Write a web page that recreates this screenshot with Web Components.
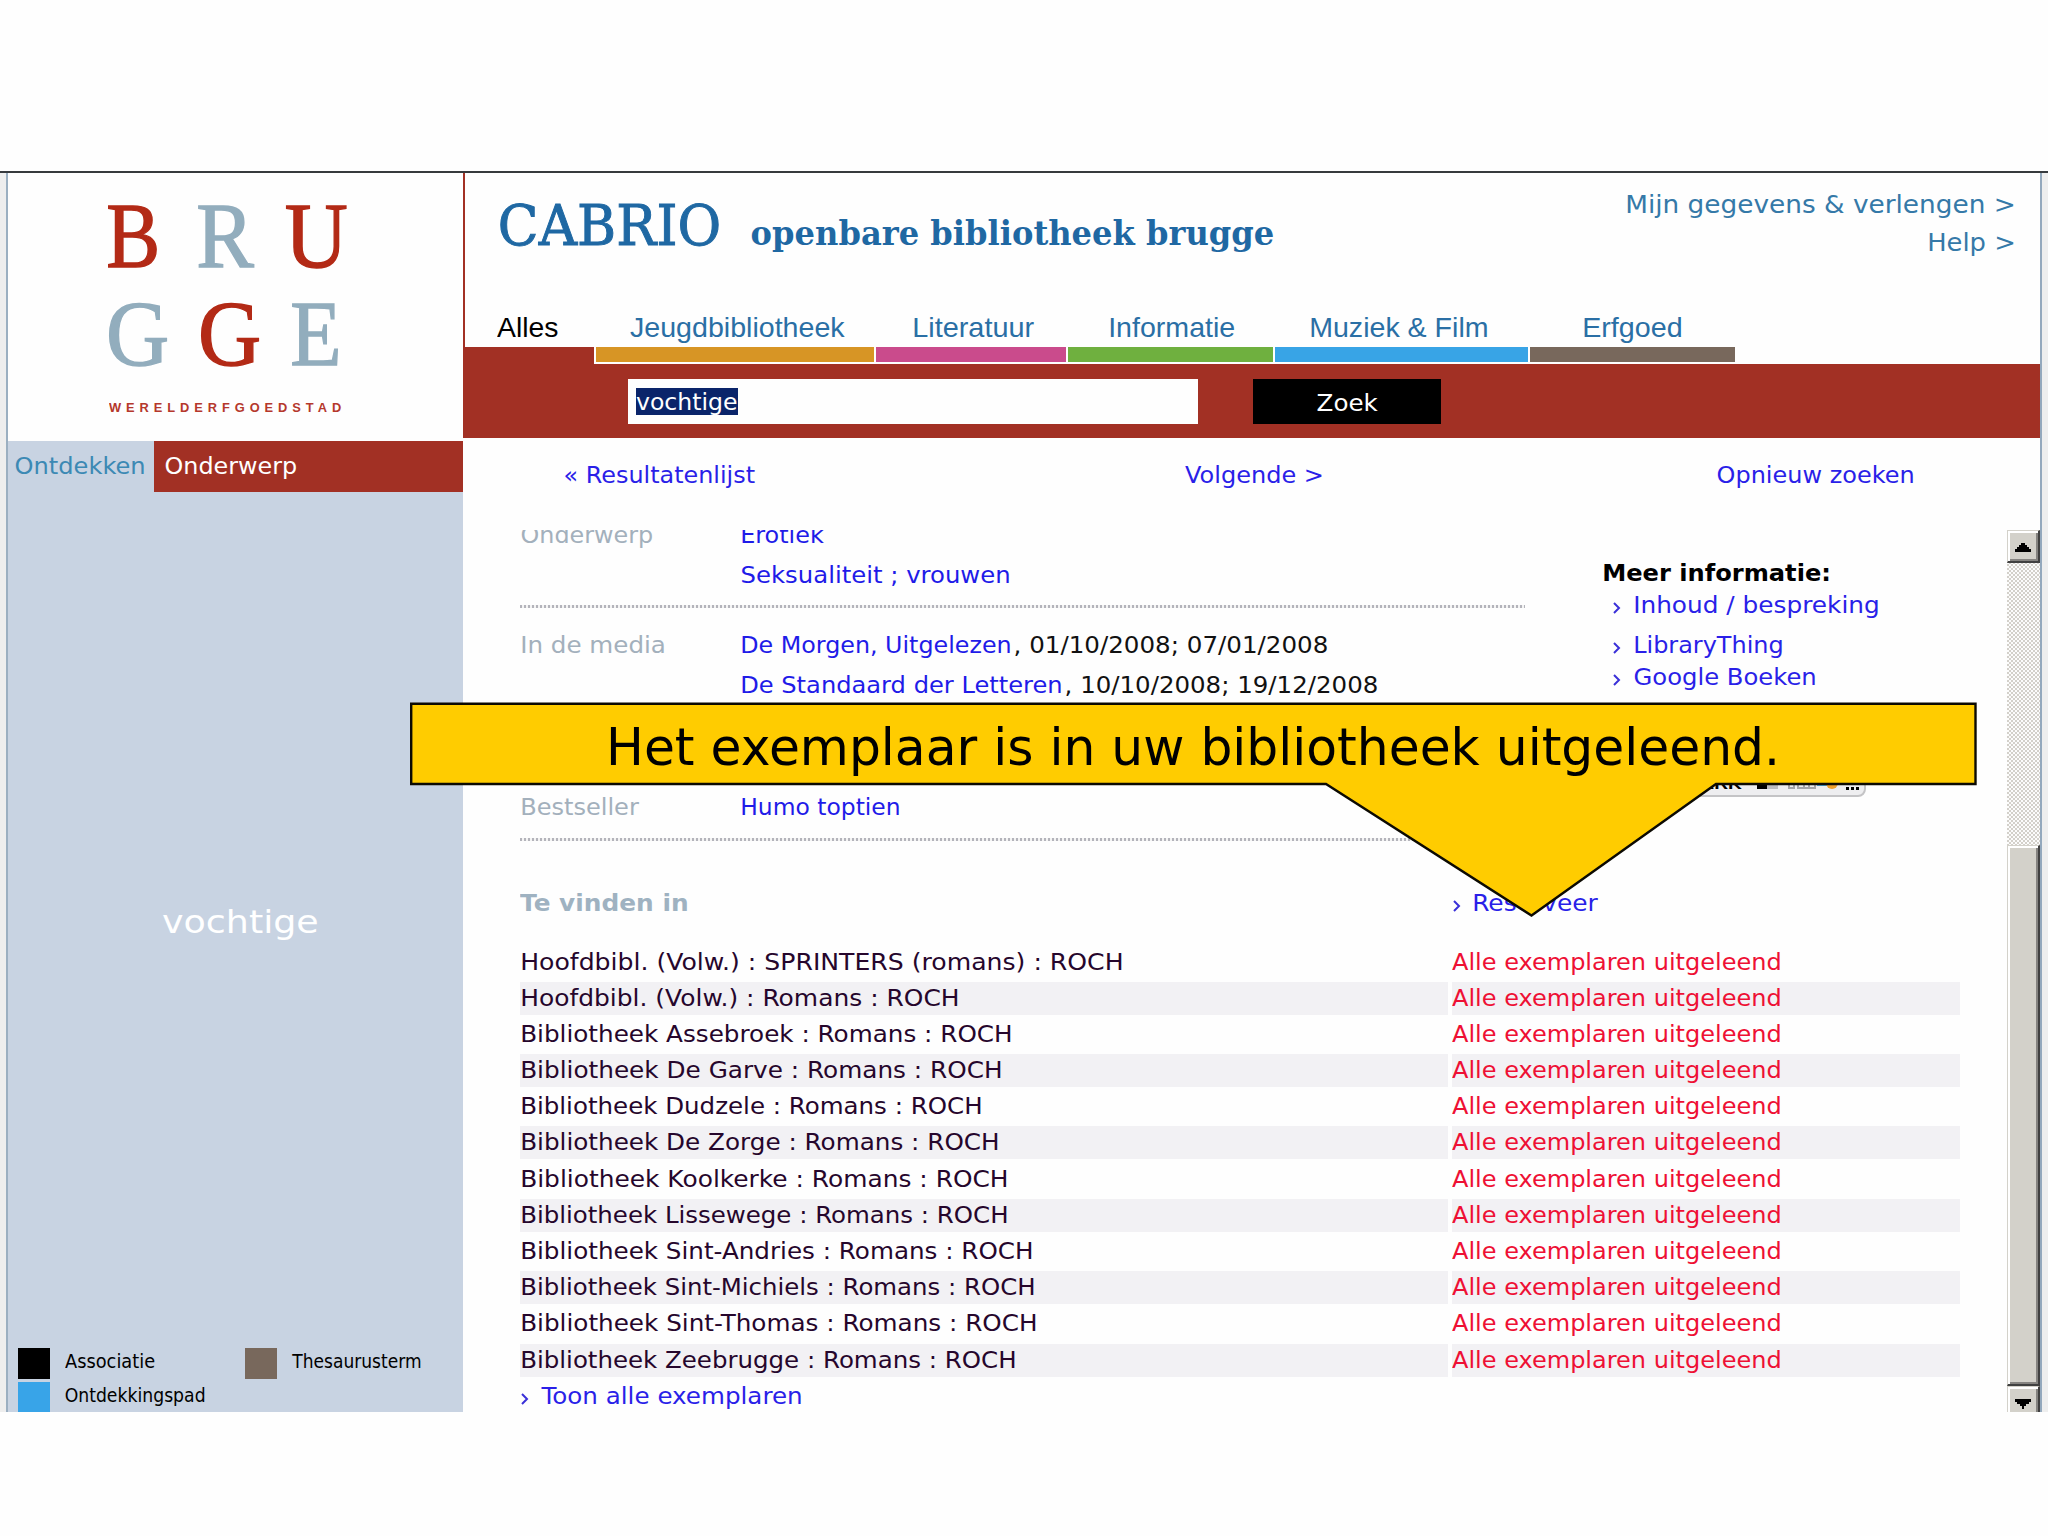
<!DOCTYPE html>
<html lang="nl">
<head>
<meta charset="utf-8">
<title>Cabrio - openbare bibliotheek Brugge</title>
<style>
  body {
    margin: 0;
    background: #fefefe;
    font-family: "DejaVu Sans", Verdana, sans-serif;
    font-size: 23px;
    color: #000;
  }
</style>
</head>
<body>
<cabrio-page>
  <discover-sidebar slot="sidebar"></discover-sidebar>
  <cabrio-header slot="main"></cabrio-header>
  <search-bar slot="main" value="vochtige"></search-bar>
  <result-nav slot="main"></result-nav>
  <record-view slot="main"></record-view>
  <call-out slot="overlay">Het exemplaar is in uw bibliotheek uitgeleend.</call-out>
</cabrio-page>

<script>
  // share of the side bearings that is trimmed off a line
  const TRIM = 0.4;

  // One line of text, stretched to `w` pixels wide
  class FitText extends HTMLElement {
    constructor() {
      super();
      this.attachShadow({ mode: 'open' });
      this.shadowRoot.innerHTML = `
        <style>
          :host { display: block; flex: none; white-space: nowrap; }
          span { display: block; width: max-content; transform-origin: 0 0; }
        </style>
        <span><slot></slot></span>
      `;
    }

    connectedCallback() {
      const width = parseFloat(this.getAttribute('w'));
      const style = getComputedStyle(this);
      const ctx = document.createElement('canvas').getContext('2d');
      ctx.font = `${style.fontWeight} ${style.fontSize} ${style.fontFamily}`;
      const spacing = parseFloat(style.letterSpacing) || 0;
      const text = this.textContent;
      const m = ctx.measureText(text);
      const left = m.actualBoundingBoxLeft * TRIM;
      const right = m.width - (m.width - m.actualBoundingBoxRight) * TRIM;
      const scale = width / (left + right + spacing * (text.length - 1));
      this.style.width = width + 'px';
      this.shadowRoot.querySelector('span').style.transform =
        `translateX(${left * scale}px) scaleX(${scale})`;
    }
  }

  class CabrioPage extends HTMLElement {
    constructor() {
      super();
      this.attachShadow({ mode: 'open' });
      this.shadowRoot.innerHTML = `
        <style>
          :host { display: block; padding-top: 171px; position: relative; height: 1365px; overflow: hidden; }
          .window {
            box-sizing: border-box;
            height: 1241px;
            border-top: 2px solid #363a3d;
            background: #fefefe;
            display: flex;
            overflow: hidden;
          }
          .edge { flex: none; box-sizing: border-box; width: 8px; background: #eeeeee; }
          .left { border-right: 2px solid #9bafc1; }
          .right { border-left: 2px solid #94a9bd; }
          .sidebar { flex: none; width: 455px; display: flex; }
          .main { flex: 1; min-width: 0; display: flex; flex-direction: column; }
        </style>
        <div class="window">
          <div class="edge left"></div>
          <div class="sidebar"><slot name="sidebar"></slot></div>
          <div class="main"><slot name="main"></slot></div>
          <div class="edge right"></div>
        </div>
        <slot name="overlay"></slot>
      `;
    }
  }

  class BruggeLogo extends HTMLElement {
    constructor() {
      super();
      this.attachShadow({ mode: 'open' });
      this.shadowRoot.innerHTML = `
        <style>
          :host { display: block; box-sizing: border-box; height: 268px; padding: 13px 0 0 99px; }
          .row { display: flex; font: 94px/98px "Liberation Serif", serif; height: 98px; -webkit-text-stroke: 1.4px; }
          .red { color: #b32a16; }
          .blue { color: #92adbd; }
          .sub {
            margin: 16px 0 0 2px;
            font: bold 13px/20px "Liberation Sans", sans-serif;
            letter-spacing: 5px;
            color: #b5382c;
          }
        </style>
        <div class="row">
          <fit-text class="red" w="52">B</fit-text>
          <fit-text class="blue" w="57" style="margin-left:38px">R</fit-text>
          <fit-text class="red" w="62" style="margin-left:31px">U</fit-text>
        </div>
        <div class="row">
          <fit-text class="blue" w="61">G</fit-text>
          <fit-text class="red" w="61" style="margin-left:31px">G</fit-text>
          <fit-text class="blue" w="49" style="margin-left:31px">E</fit-text>
        </div>
        <fit-text class="sub" w="232">WERELDERFGOEDSTAD</fit-text>
      `;
    }
  }

  class LegendItem extends HTMLElement {
    constructor() {
      super();
      this.attachShadow({ mode: 'open' });
      this.shadowRoot.innerHTML = `
        <style>
          :host { display: flex; font: 20px/26px "DejaVu Sans", sans-serif; color: #000; }
          i { flex: none; width: 32px; height: 31px; margin-right: 15px; background: ${this.getAttribute('color')}; }
        </style>
        <i></i><fit-text w="${this.getAttribute('w')}">${this.getAttribute('label')}</fit-text>
      `;
    }
  }

  class DiscoverSidebar extends HTMLElement {
    constructor() {
      super();
      this.attachShadow({ mode: 'open' });
      this.shadowRoot.innerHTML = `
        <style>
          :host { flex: 1; display: flex; flex-direction: column; background: #c8d3e2; }
          brugge-logo { background: #fefefe; }
          .tabs { display: flex; height: 51px; line-height: 51px; }
          .tab { box-sizing: border-box; width: 146px; padding-left: 7px; color: #3c89b4; }
          .active { flex: 1; padding-left: 11px; background: #a23024; color: #fff; }
          .cloud { flex: 1; display: flex; flex-direction: column; padding: 410px 0 0 154px; font-size: 32px; line-height: 40px; color: #fff; }
          .legend {
            display: grid;
            grid-template-columns: 227px 1fr;
            grid-auto-rows: 34px;
            height: 64px;
            padding-left: 10px;
            overflow: hidden;
          }
        </style>
        <brugge-logo></brugge-logo>
        <div class="tabs">
          <div class="tab"><fit-text w="130">Ontdekken</fit-text></div>
          <div class="tab active"><fit-text w="132">Onderwerp</fit-text></div>
        </div>
        <div class="cloud"><fit-text w="156">vochtige</fit-text></div>
        <div class="legend">
          <legend-item color="#000" label="Associatie" w="90"></legend-item>
          <legend-item color="#78685c" label="Thesaurusterm" w="129"></legend-item>
          <legend-item color="#38a4e8" label="Ontdekkingspad" w="140"></legend-item>
        </div>
      `;
    }
  }

  const TABS = [
    { label: 'Alles', w: 61, width: 129, indent: 32, color: '#a23024', active: true },
    { label: 'Jeugdbibliotheek', w: 215, width: 278, indent: 34, color: '#d79525' },
    { label: 'Literatuur', w: 121, width: 190, indent: 37, color: '#ca4b8c' },
    { label: 'Informatie', w: 126, width: 205, indent: 41, color: '#6fb03f' },
    { label: 'Muziek & Film', w: 178, width: 253, indent: 35, color: '#38a4e6' },
    { label: 'Erfgoed', w: 99, width: 205, indent: 53, color: '#78685c' },
  ];

  class CabrioHeader extends HTMLElement {
    constructor() {
      super();
      this.attachShadow({ mode: 'open' });
      this.shadowRoot.innerHTML = `
        <style>
          :host { display: block; height: 191px; border-left: 2px solid #a23024; }
          .top { display: flex; justify-content: space-between; height: 137px; }
          .brand { display: flex; padding-left: 34px; font-family: "DejaVu Serif", serif; color: #1f68a3; }
          .name { font-size: 56px; line-height: 64px; padding-top: 21px; -webkit-text-stroke: 1px; }
          .sub { font-size: 34px; font-weight: bold; line-height: 40px; margin-left: 31px; padding-top: 40px; }
          .links {
            display: flex;
            flex-direction: column;
            align-items: flex-end;
            padding: 13px 25px 0 0;
            font-size: 25px;
            line-height: 38px;
            color: #3579a8;
          }
          nav { display: flex; gap: 2px; }
          .tab { font: 28px/36px "Liberation Sans", Arial, sans-serif; color: #2a6fa5; height: 54px; }
          .tab fit-text { height: 37px; }
          .tab i { display: block; height: 15px; }
          .active { color: #000; }
          .active i { height: 17px; }
        </style>
        <div class="top">
          <div class="brand">
            <fit-text class="name" w="221">CABRIO</fit-text>
            <fit-text class="sub" w="523">openbare bibliotheek brugge</fit-text>
          </div>
          <div class="links">
            <fit-text w="389">Mijn gegevens &amp; verlengen &gt;</fit-text>
            <fit-text w="87">Help &gt;</fit-text>
          </div>
        </div>
        <nav>
          ${TABS.map(t => `
            <div class="tab ${t.active ? 'active' : ''}" style="width:${t.width}px">
              <fit-text w="${t.w}" style="margin-left:${t.indent}px">${t.label.replace('&', '&amp;')}</fit-text>
              <i style="background:${t.color}"></i>
            </div>`).join('')}
        </nav>
      `;
    }
  }

  class SearchBar extends HTMLElement {
    constructor() {
      super();
      this.attachShadow({ mode: 'open' });
      this.shadowRoot.innerHTML = `
        <style>
          :host { display: flex; box-sizing: border-box; height: 74px; padding: 15px 0 0 165px; background: #a23024; }
          .field { box-sizing: border-box; width: 570px; height: 45px; padding: 9px 8px; background: #fefefe; }
          .selection { display: flex; width: 102px; height: 27px; line-height: 29px; background: #0a246a; color: #fff; }
          .button {
            display: flex;
            justify-content: center;
            width: 188px;
            height: 45px;
            margin-left: 55px;
            line-height: 48px;
            background: #000;
            color: #fff;
          }
        </style>
        <div class="field"><div class="selection"><fit-text w="101">${this.getAttribute('value')}</fit-text></div></div>
        <div class="button"><fit-text w="61">Zoek</fit-text></div>
      `;
    }
  }

  class ResultNav extends HTMLElement {
    constructor() {
      super();
      this.attachShadow({ mode: 'open' });
      this.shadowRoot.innerHTML = `
        <style>
          :host {
            display: flex;
            box-sizing: border-box;
            height: 92px;
            padding: 23px 0 0 101px;
            line-height: 28px;
            color: #2a1fe8;
          }
        </style>
        <fit-text w="191">« Resultatenlijst</fit-text>
        <fit-text w="138" style="margin-left:430px">Volgende &gt;</fit-text>
        <fit-text w="197" style="margin-left:394px">Opnieuw zoeken</fit-text>
      `;
    }
  }

  class ArrowLink extends HTMLElement {
    constructor() {
      super();
      this.attachShadow({ mode: 'open' });
      this.shadowRoot.innerHTML = `
        <style>
          :host { display: flex; align-items: center; color: #2a1fe8; }
          svg { flex: none; margin: 5px ${this.getAttribute('gap') || 13}px 0 0; }
        </style>
        <svg width="8" height="12" viewBox="0 0 8 12" fill="none" stroke="#3a30d8" stroke-width="2"><path d="M1 1l5 5-5 5"/></svg>
        <fit-text w="${this.getAttribute('w')}">${this.textContent}</fit-text>
      `;
    }
  }

  class RecordDetails extends HTMLElement {
    constructor() {
      super();
      this.attachShadow({ mode: 'open' });
      this.shadowRoot.innerHTML = `
        <style>
          :host { display: block; width: 1005px; margin: -15px 0 0 57px; line-height: 40px; }
          .row { display: grid; grid-template-columns: 220px 1fr; padding-left: 1px; box-sizing: border-box; }
          .label { color: #a3b0bc; }
          .value { color: #1f1be8; }
          .line { display: flex; }
          .line .plain { color: #111; margin-left: 3px; }
          .rule {
            height: 3px;
            background: repeating-linear-gradient(90deg, #b4b4bb 0 2px, #f4f4f4 2px 4px);
          }
        </style>
        <div class="row">
          <div class="label"><fit-text w="132">Onderwerp</fit-text></div>
          <div class="value">
            <fit-text w="83">Erotiek</fit-text>
            <fit-text w="269">Seksualiteit ; vrouwen</fit-text>
          </div>
        </div>
        <div class="rule" style="margin:10px 0 17px"></div>
        <div class="row" style="height:162px">
          <div class="label"><fit-text w="144">In de media</fit-text></div>
          <div class="value">
            <div class="line"><fit-text w="270">De Morgen, Uitgelezen</fit-text><fit-text class="plain" w="314">, 01/10/2008; 07/01/2008</fit-text></div>
            <div class="line"><fit-text w="321">De Standaard der Letteren</fit-text><fit-text class="plain" w="313">, 10/10/2008; 19/12/2008</fit-text></div>
          </div>
        </div>
        <div class="row">
          <div class="label"><fit-text w="118">Bestseller</fit-text></div>
          <div class="value"><fit-text w="159">Humo toptien</fit-text></div>
        </div>
        <div class="rule" style="margin-top:11px"></div>
      `;
    }
  }

  class MoreInfo extends HTMLElement {
    constructor() {
      super();
      this.attachShadow({ mode: 'open' });
      this.shadowRoot.innerHTML = `
        <style>
          :host { display: block; margin: 27px 0 0 78px; line-height: 32px; }
          .title { font-weight: bold; }
          arrow-link { margin-left: 10px; }
          .bookmark {
            display: flex;
            align-items: flex-end;
            box-sizing: border-box;
            width: 263px;
            height: 36px;
            margin-top: 68px;
            padding: 0 0 2px 22px;
            border: 2px solid #c4c4c6;
            border-radius: 8px;
            background: #eeeef0;
            font: bold 15px/18px "Liberation Sans", sans-serif;
          }
          .bookmark svg { margin-left: 15px; }
        </style>
        <fit-text class="title" w="227">Meer informatie:</fit-text>
        <arrow-link w="245">Inhoud / bespreking</arrow-link>
        <arrow-link w="149" style="margin-top:8px">LibraryThing</arrow-link>
        <arrow-link w="182">Google Boeken</arrow-link>
        <div class="bookmark">
          <fit-text w="115">BOOKMARK</fit-text>
          <svg width="104" height="18" viewBox="0 0 104 18">
            <path d="M0 0h10v14H0z"/>
            <path d="M10 0h11v14H10z" fill="#bcbcc0"/>
            <path d="M32 3h5v10h-5zM41 3h17v10H41zM47 3v10M52 3v10M41 9h17" fill="none" stroke="#a4a4a8" stroke-width="2"/>
            <path d="M60 3h12v8H60z" fill="#4aa9dc"/>
            <circle cx="75" cy="8" r="6" fill="#f0a02c"/>
            <path d="M89 12h3v3h-3zM94 12h3v3h-3zM99 12h3v3h-3z"/>
          </svg>
        </div>
      `;
    }
  }

  const HOLDINGS = [
    ['Hoofdbibl. (Volw.) : SPRINTERS (romans) : ROCH', 602],
    ['Hoofdbibl. (Volw.) : Romans : ROCH', 438],
    ['Bibliotheek Assebroek : Romans : ROCH', 491],
    ['Bibliotheek De Garve : Romans : ROCH', 481],
    ['Bibliotheek Dudzele : Romans : ROCH', 461],
    ['Bibliotheek De Zorge : Romans : ROCH', 478],
    ['Bibliotheek Koolkerke : Romans : ROCH', 487],
    ['Bibliotheek Lissewege : Romans : ROCH', 487],
    ['Bibliotheek Sint-Andries : Romans : ROCH', 512],
    ['Bibliotheek Sint-Michiels : Romans : ROCH', 514],
    ['Bibliotheek Sint-Thomas : Romans : ROCH', 516],
    ['Bibliotheek Zeebrugge : Romans : ROCH', 495],
  ];

  class HoldingsList extends HTMLElement {
    constructor() {
      super();
      this.attachShadow({ mode: 'open' });
      this.shadowRoot.innerHTML = `
        <style>
          :host { display: block; margin: 47px 0 0 57px; }
          .head, .row { display: grid; grid-template-columns: 928px 508px; column-gap: 4px; }
          .head { line-height: 30px; margin-bottom: 27.5px; }
          .head fit-text { font-weight: bold; color: #9fb2c1; }
          .head arrow-link { margin-left: 1px; }
          .row { height: 31px; line-height: 33px; margin-bottom: 5.2px; }
          .row fit-text { margin-left: 1px; }
          .rows .row:nth-child(even) > div { background: #f2f1f4; }
          .place { color: #26062c; }
          .status { color: #ee1034; }
          .all { margin-left: 1px; line-height: 33px; }
        </style>
        <div class="head">
          <fit-text w="168">Te vinden in</fit-text>
          <arrow-link w="125" gap="12">Reserveer</arrow-link>
        </div>
        <div class="rows">${HOLDINGS.map(([place, w]) => `
          <div class="row">
            <div class="place"><fit-text w="${w}">${place}</fit-text></div>
            <div class="status"><fit-text w="329" style="margin-left:0">Alle exemplaren uitgeleend</fit-text></div>
          </div>`).join('')}
        </div>
        <arrow-link class="all" w="261" gap="12">Toon alle exemplaren</arrow-link>
      `;
    }
  }

  // Classic Windows scrollbar; the bottom button is cut off by the window
  class ClassicScrollbar extends HTMLElement {
    constructor() {
      super();
      this.attachShadow({ mode: 'open' });
      this.shadowRoot.innerHTML = `
        <style>
          :host {
            flex: none;
            width: 33px;
            display: flex;
            flex-direction: column;
            background: repeating-conic-gradient(#d3d0ca 0 25%, #fcfcfc 0 50%) 0 0 / 4px 4px;
          }
          div {
            box-sizing: border-box;
            flex: none;
            display: flex;
            justify-content: center;
            background: #d3d1ca;
            border: 1px solid #d3d1ca;
            border-right: 2px solid #404040;
            border-bottom: 2px solid #404040;
            box-shadow: inset 2px 2px #fff, inset -2px -2px #858380;
          }
          svg { flex: none; }
          .up { height: 33px; padding-top: 11px; }
          .thumb { height: 541px; margin-top: 282px; }
          .down { height: 34px; padding-top: 12px; }
        </style>
        <div class="up"><svg width="16" height="10" viewBox="0 0 16 10"><path d="M6 1h4v2h2v2h2v2h2v3H0V7h2V5h2V3h2z"/></svg></div>
        <div class="thumb"></div>
        <div class="down"><svg width="16" height="10" viewBox="0 0 16 10"><path d="M0 0h16v3h-2v2h-3v2H9v3H7V7H5V5H2V3H0z"/></svg></div>
      `;
    }
  }

  class RecordView extends HTMLElement {
    constructor() {
      super();
      this.attachShadow({ mode: 'open' });
      this.shadowRoot.innerHTML = `
        <style>
          :host { flex: none; display: flex; height: 882px; overflow: hidden; }
          .content { flex: 1; min-width: 0; }
          .record { display: flex; height: 311px; }
        </style>
        <div class="content">
          <div class="record">
            <record-details></record-details>
            <more-info></more-info>
          </div>
          <holdings-list></holdings-list>
        </div>
        <classic-scrollbar></classic-scrollbar>
      `;
    }
  }

  class CallOut extends HTMLElement {
    constructor() {
      super();
      this.attachShadow({ mode: 'open' });
      this.shadowRoot.innerHTML = `
        <style>
          :host { display: block; position: absolute; left: 410px; top: 702px; width: 1568px; height: 216px; }
          svg { display: block; position: absolute; left: 0; top: 0; }
          .text { position: relative; padding-left: 198px; font-size: 51px; line-height: 60px; top: 16px; }
        </style>
        <svg width="1568" height="216" viewBox="0 0 1568 216">
          <path d="M1.2 1.8H1565.5V82H1306L1121.5 213.5 916 82H1.2z" fill="#fc0" stroke="#0c0a02" stroke-width="2.4"/>
        </svg>
        <div class="text"><fit-text w="1170">${this.textContent}</fit-text></div>
      `;
    }
  }

  customElements.define('fit-text', FitText);
  customElements.define('arrow-link', ArrowLink);
  customElements.define('legend-item', LegendItem);
  customElements.define('brugge-logo', BruggeLogo);
  customElements.define('discover-sidebar', DiscoverSidebar);
  customElements.define('cabrio-header', CabrioHeader);
  customElements.define('search-bar', SearchBar);
  customElements.define('result-nav', ResultNav);
  customElements.define('record-details', RecordDetails);
  customElements.define('more-info', MoreInfo);
  customElements.define('holdings-list', HoldingsList);
  customElements.define('classic-scrollbar', ClassicScrollbar);
  customElements.define('record-view', RecordView);
  customElements.define('call-out', CallOut);
  customElements.define('cabrio-page', CabrioPage);
</script>
</body>
</html>
